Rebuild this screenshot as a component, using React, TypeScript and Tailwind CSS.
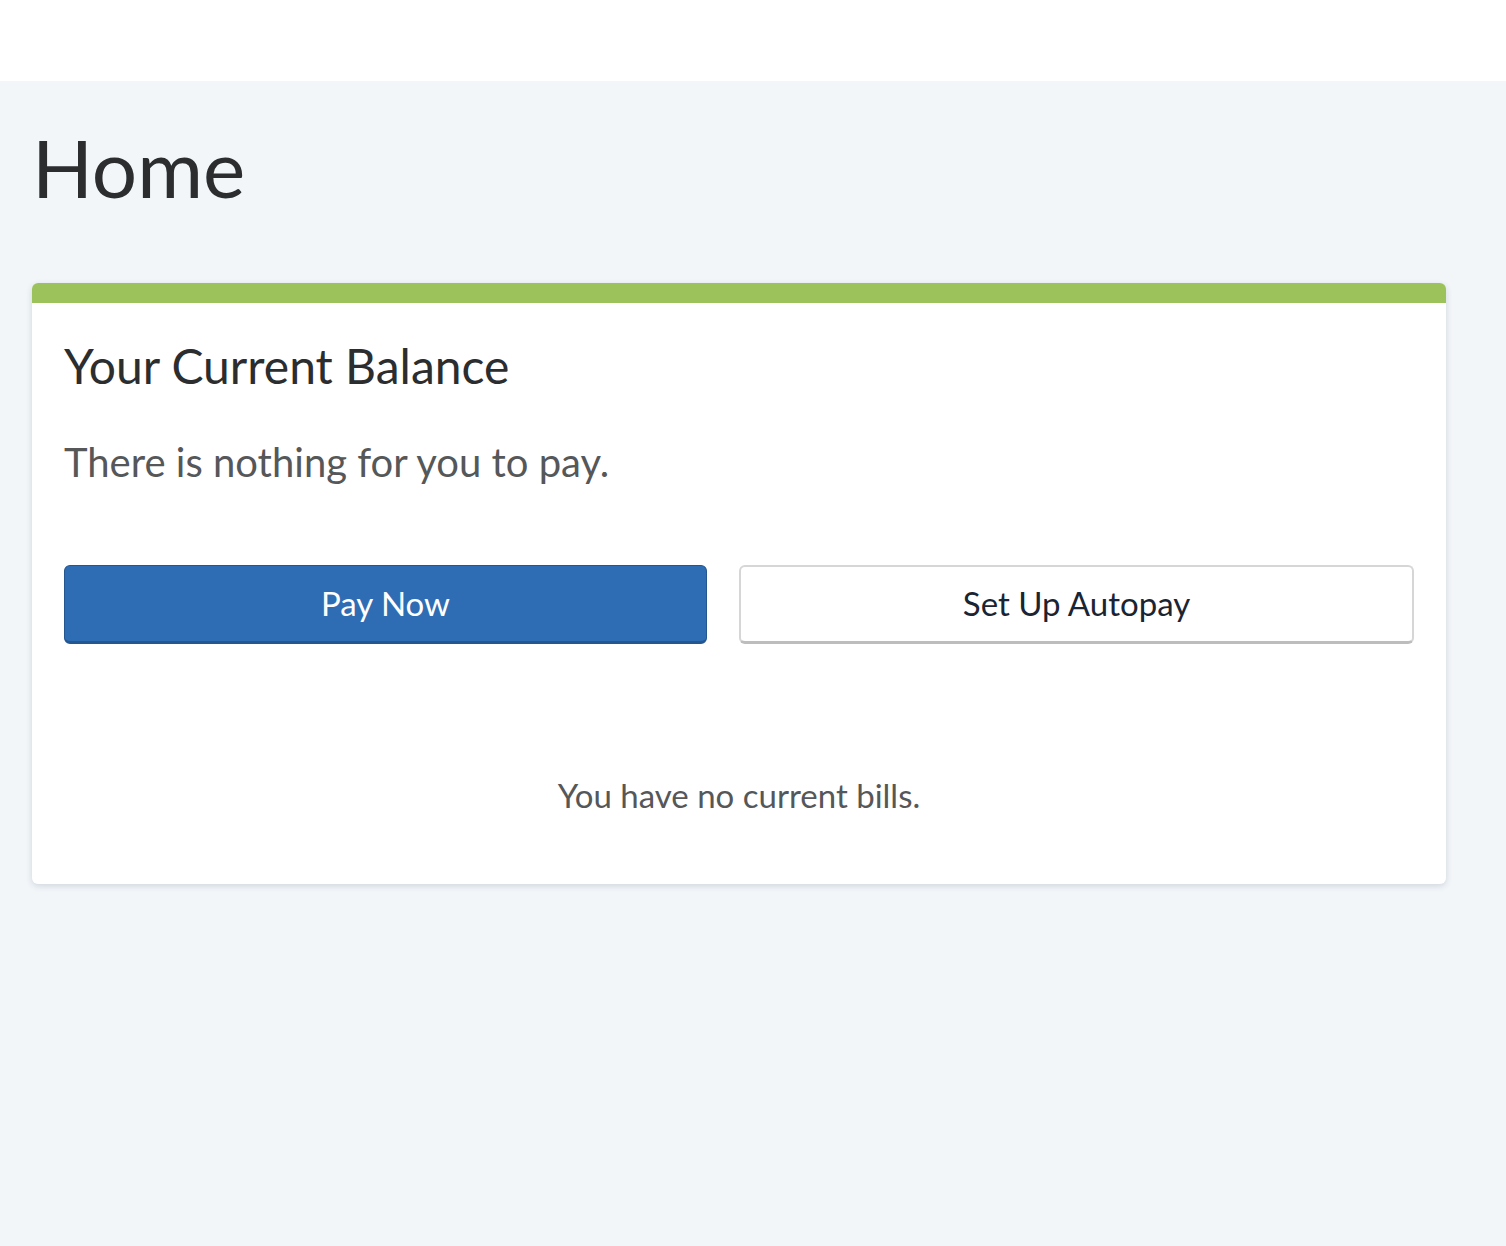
export default function App() {
  return (
    <div
      className="min-h-[1246px] w-full bg-[#f2f6f9]"
      style={{ fontFamily: 'Lato, "Noto Sans", sans-serif' }}
    >
      <header className="h-[81px] w-full bg-white" />

      <main className="px-8">
        <h1 className="pt-[38px] text-[80px] leading-[96px] font-normal text-[#2b2d2f]">Home</h1>

        <section className="mt-[68px] w-[1414px] overflow-hidden rounded-[6px] bg-white shadow-[0_2px_6px_rgba(30,50,80,0.16)]">
          <div className="h-5 bg-[#9cc35b]" />
          <div className="px-8 pt-[34px] pb-[70px]">
            <h2 className="text-[48px] leading-[58px] font-normal text-[#2b2d2f]">
              Your Current Balance
            </h2>
            <p className="mt-[43px] text-[40px] leading-[48px] text-[#555759]">
              There is nothing for you to pay.
            </p>

            <div className="mt-[79px] flex gap-8">
              <button className="h-[79px] w-[643px] rounded-[6px] border border-[#24568f] border-b-[3px] bg-[#2e6db4] text-[33px] text-white">
                Pay Now
              </button>
              <button className="h-[79px] flex-1 rounded-[6px] border-2 border-[#d6d6d6] border-b-[3px] border-b-[#bdbdbd] bg-white text-[33px] text-[#1a2433]">
                Set Up Autopay
              </button>
            </div>

            <p className="mt-[132px] text-center text-[33px] leading-[38px] text-[#555759]">
              You have no current bills.
            </p>
          </div>
        </section>
      </main>
    </div>
  );
}
